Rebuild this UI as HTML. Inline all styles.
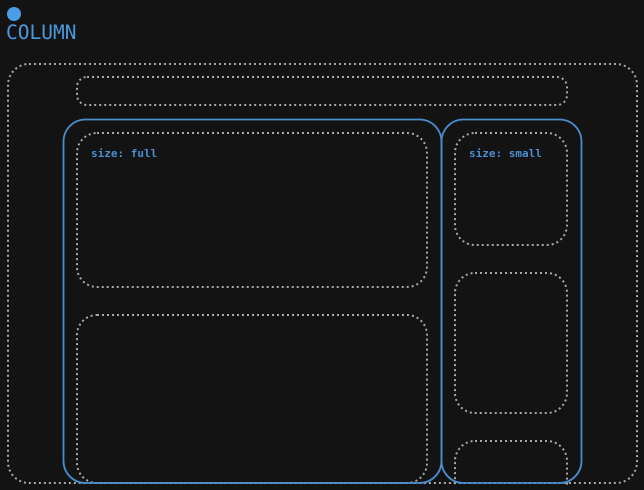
<!DOCTYPE html>
<html><head><style>
html,body{margin:0;padding:0;background:#131313;width:644px;height:490px;overflow:hidden;position:relative}
.t{position:absolute;font-family:"DejaVu Sans Mono","Liberation Mono",monospace;color:#4a98dc}
.l{font-weight:bold;font-size:11px;color:#4a8fd0}
</style></head><body>
<svg width="644" height="490" style="position:absolute;left:0;top:0">
<defs><clipPath id="c"><rect x="0" y="0" width="644" height="485"/></clipPath></defs>
<circle cx="14" cy="14" r="7" fill="#4a9ee8"/>
<g fill="none" stroke="#a9a9a9" stroke-width="2" stroke-dasharray="2 3" clip-path="url(#c)">
<rect x="8" y="64" width="629" height="419" rx="21"/>
<rect x="77" y="77" width="490" height="28" rx="10"/>
<rect x="77" y="133" width="350" height="154" rx="20"/>
<rect x="77" y="315" width="350" height="168" rx="20"/>
<rect x="455" y="133" width="112" height="112" rx="20"/>
<rect x="455" y="273" width="112" height="140" rx="20"/>
<rect x="455" y="441" width="112" height="70" rx="20"/>
</g>
<g fill="none" stroke="#4a8ccc" stroke-width="1.8">
<rect x="63.5" y="119.5" width="378" height="363.5" rx="22"/>
<rect x="441.5" y="119.5" width="140" height="363.5" rx="22"/>
</g>
</svg>
<div class="t" style="left:6px;top:21px;font-size:19.5px">COLUMN</div>
<div class="t l" style="left:91px;top:147px">size: full</div>
<div class="t l" style="left:469px;top:147px">size: small</div>
</body></html>
